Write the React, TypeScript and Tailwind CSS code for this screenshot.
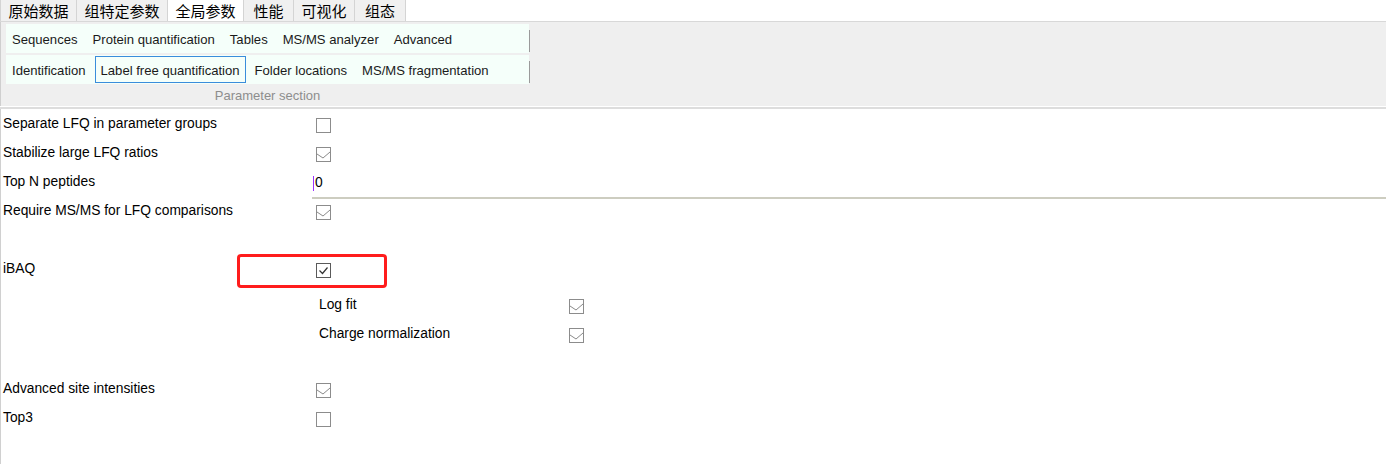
import React from "react";

const tabs = ["原始数据", "组特定参数", "全局参数", "性能", "可视化", "组态"];
const tabW = ["w-[76px]", "w-[91px]", "w-[76px]", "w-[50px]", "w-[61px]", "w-[52px]"];

const row1 = ["Sequences", "Protein quantification", "Tables", "MS/MS analyzer", "Advanced"];
const row2 = ["Identification", "Label free quantification", "Folder locations", "MS/MS fragmentation"];

const Check = ({ checked = false, strong = false }: { checked?: boolean; strong?: boolean }) => (
  <svg width="15" height="15" viewBox="0 0 15 15" className="shrink-0">
    <rect x="0.5" y="0.5" width="14" height="14" fill="white" stroke={strong ? "#5a5a5a" : "#8c8c8c"} />
    {checked &&
      (strong ? (
        <path d="M3.5 7.5 L6.5 10.5 L11.5 4.5" fill="none" stroke="#333" strokeWidth="1.2" />
      ) : (
        <path d="M1 7 L7 11 L14 5" fill="none" stroke="#8a8a8a" strokeWidth="1" />
      ))}
  </svg>
);

const Row = ({ label, children, nested = false }: { label: string; children?: React.ReactNode; nested?: boolean }) => (
  <div className="h-[29px] flex items-center">
    <div className={nested ? "w-[568px] pl-[318px] pb-[2px]" : "w-[311px] pl-[2px] pb-[2px]"}>{label}</div>
    <div className={nested ? "" : "ml-[4px]"}>{children}</div>
  </div>
);

const RibbonRow = ({ items, selected }: { items: string[]; selected?: number }) => (
  <div className="flex">
    <div className="w-[523px] h-[29px] bg-[#f5fffa] flex items-center gap-[15px] pl-[6px] pt-[2px]">
      {items.map((t, i) =>
        i === selected ? (
          <span key={t} className="-mx-[6px] px-[5px] h-[27px] -mt-[2px] pt-[2px] flex items-center border border-[#3a8ddb]">
            {t}
          </span>
        ) : (
          <span key={t}>{t}</span>
        )
      )}
    </div>
    <div className="w-px h-[22px] self-end mb-px bg-[#9a9a9a]" />
  </div>
);

export default function App() {
  return (
    <div className="w-[1386px] h-[464px] bg-white overflow-hidden text-black font-['Liberation_Sans',Arial,sans-serif]">
      {/* top tabs */}
      <div className="h-[22px] flex border-b border-[#d8d8d8] font-['Noto_Sans_CJK_SC',sans-serif] text-[15px] leading-none">
        {tabs.map((t, i) => (
          <div
            key={t}
            className={`${tabW[i]} h-[21px] flex items-center justify-center border-l border-[#d4d4d4] ${
              i === 2 ? "bg-white" : "bg-[#f0f0f0]"
            } ${i === tabs.length - 1 ? "border-r" : ""}`}
          >
            {t}
          </div>
        ))}
      </div>

      {/* ribbon */}
      <div className="bg-[#efefef] h-[84px] pl-[5px] pt-[2px] text-[13.1px] text-[#1a1a1a] border-l border-[#cfcfcf]">
        <div className="flex flex-col gap-[2px] w-[524px]">
          <RibbonRow items={row1} />
          <RibbonRow items={row2} selected={1} />
        </div>
        <div className="w-[523px] h-[22px] flex items-center justify-center pt-[2px] text-[13px] text-[#8d8d8d]">
          Parameter section
        </div>
      </div>
      <div className="h-px bg-white" />
      <div className="h-[2px] bg-[#dddddd]" />

      {/* parameters */}
      <div className="h-[355px] border-l border-[#d0d0d0] text-[13.8px] pt-[2px]">
        <Row label="Separate LFQ in parameter groups">
          <Check />
        </Row>
        <Row label="Stabilize large LFQ ratios">
          <Check checked />
        </Row>
        <div className="h-[29px] flex items-center">
          <div className="w-[311px] pl-[2px] pb-[2px]">Top N peptides</div>
          <div className="self-start flex-1 h-[30px] border-b-2 border-[#cdcdc0] flex items-center">
            <div className="ml-px w-px h-[15px] bg-[#9b30ff]" />
            <span className="ml-px">0</span>
          </div>
        </div>
        <Row label="Require MS/MS for LFQ comparisons">
          <Check checked />
        </Row>

        <div className="h-[29px]" />
        <div className="relative">
          <Row label="iBAQ">
            <Check checked strong />
          </Row>
          <div className="absolute left-[236px] -top-[2px] w-[150px] h-[34px] border-[3px] border-[#ff1c1c] rounded-[4px]" />
        </div>
        <div className="h-[7px]" />
        <Row label="Log fit" nested>
          <Check checked />
        </Row>
        <Row label="Charge normalization" nested>
          <Check checked />
        </Row>

        <div className="h-[26px]" />
        <Row label="Advanced site intensities">
          <Check checked />
        </Row>
        <Row label="Top3">
          <Check />
        </Row>
      </div>
    </div>
  );
}
